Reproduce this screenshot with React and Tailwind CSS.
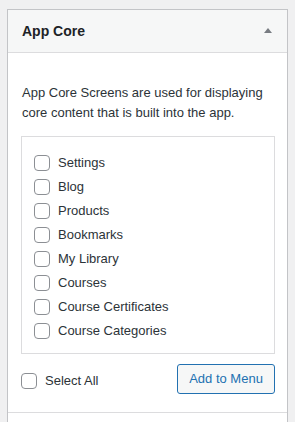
import React from "react";

const items = [
  "Settings",
  "Blog",
  "Products",
  "Bookmarks",
  "My Library",
  "Courses",
  "Course Certificates",
  "Course Categories",
];

function Check() {
  return (
    <input
      type="checkbox"
      className="appearance-none w-4 h-4 shrink-0 m-0 border border-[#8c8f94] rounded-[4px] bg-white"
    />
  );
}

export default function App() {
  return (
    <div
      className="h-[422px] overflow-hidden bg-[#f0f0f1] pt-[9px] px-[7px] text-[#2c3338]"
      style={{ fontFamily: '"Liberation Sans", Arial, sans-serif' }}
    >
      <div className="border border-b-0 border-[#c3c4c7] bg-white h-full">
        {/* Header */}
        <div className="flex items-center justify-between h-[43px] bg-[#f6f7f7] border-b border-[#dcdcde] pl-[14px] pr-[15px]">
          <h3 className="text-[14px] font-semibold text-[#1d2327]">App Core</h3>
          <svg width="8" height="5" viewBox="0 0 8 5" className="mt-[-1px]">
            <path d="M0 5 L4 0 L8 5 Z" fill="#787c82" />
          </svg>
        </div>

        {/* Body */}
        <div className="pt-[30px] pl-[13px] pr-[12px] pb-[18px] border-b border-[#dcdcde]">
          <p className="text-[13px] leading-[19.5px] pl-px">
            App Core Screens are used for displaying core content that is built
            into the app.
          </p>

          <div className="mt-[14px] h-[218px] border border-[#dcdcde] pt-[14px] pl-[12px]">
            {items.map((item) => (
              <label key={item} className="flex items-center h-[24px] text-[13px]">
                <Check />
                <span className="ml-[8px]">{item}</span>
              </label>
            ))}
          </div>

          <div className="flex items-center justify-between mt-[10px]">
            <label className="flex items-center text-[13px] mt-[3px]">
              <Check />
              <span className="ml-[8px]">Select All</span>
            </label>
            <button className="w-[98px] h-[30px] border border-[#2271b1] rounded-[3px] bg-[#f6f7f7] text-[#2271b1] text-[13px]">
              Add to Menu
            </button>
          </div>
        </div>
      </div>
    </div>
  );
}
